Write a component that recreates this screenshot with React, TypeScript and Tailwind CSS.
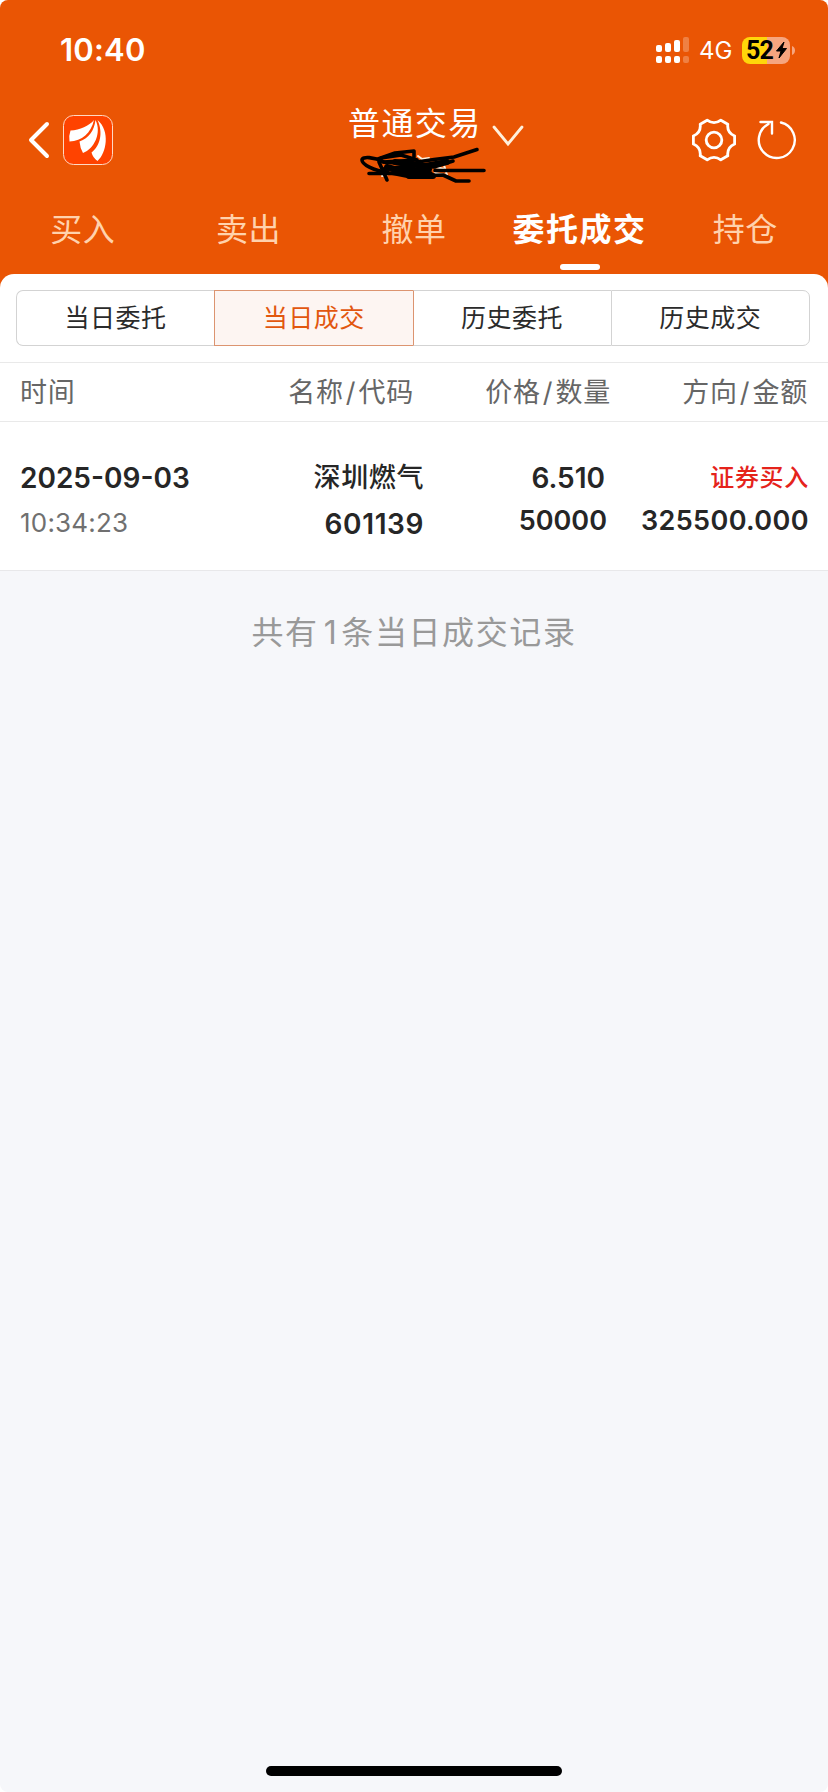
import clsx from 'clsx';

const TABS = ['买入', '卖出', '撤单', '委托成交', '持仓'];
const FILTERS = ['当日委托', '当日成交', '历史委托', '历史成交'];
const SIGNAL = [7, 9, 12, 15];

const StatusBar = () => (
  <div className="flex h-[100px] items-center justify-between pl-[60px] pr-8 text-white">
    <span className="pt-px text-[31px] font-semibold tracking-[0.2px]">10:40</span>
    <div className="flex items-center">
      <svg width="34" height="28" viewBox="0 0 34 28" fill="currentColor">
        {SIGNAL.map((h, i) => (
          <g key={h} opacity={i === 3 ? 0.25 : 1}>
            <rect x={i * 9} y={16 - h} width="6" height={h} rx="2" />
            <rect x={i * 9} y="20" width="6" height="7" rx="2" />
          </g>
        ))}
      </svg>
      <span className="ml-[9px] w-[43px] pt-0.5 text-[24px] leading-[28px]">4G</span>
      <div className="flex h-[27px] w-12 items-center rounded-[8px] bg-[linear-gradient(90deg,#ffd60a_52%,#f6a57f_52%)] pl-1 text-black">
        <span className="font-['Roboto',sans-serif] text-[25px] font-bold leading-[27px] tracking-[-0.8px]">52</span>
        <svg width="13" height="18" viewBox="0 0 12 18" className="ml-0.5" fill="currentColor">
          <path d="M8.5 1 1 10h4.5L3.5 17 11 7.500H6.600z" stroke="currentColor" strokeLinejoin="round" />
        </svg>
      </div>
      <svg width="4" height="9" viewBox="0 0 4 9" className="ml-0.5">
        <path d="M0 0c4 1.500 4 7.500 0 9z" fill="#f6a57f" />
      </svg>
    </div>
  </div>
);

const AppLogo = () => (
  <svg width="50" height="50" viewBox="0 0 50 50">
    <rect x="0.5" y="0.5" width="49" height="49" rx="10" fill="#ff4300" stroke="#ffd9c4" />
    <g fill="#fff">
      <path d="M31 5C26 11 17 15 7.500 15.500Q5.500 21 6.500 26.500C19 26 28 18 31 5Z" />
      <path d="M32.500 5C31 16 26 23 16.500 26.500Q17 33 20 38C31 34 39 18 32.500 5Z" />
      <path d="M34.500 5C40.500 18 37 31 28.500 37.500Q30 43 34.500 46C43.500 38 47.500 16 34.500 5Z" />
    </g>
  </svg>
);

const Scribble = () => (
  <svg
    width="136"
    height="45"
    viewBox="0 0 136 45"
    className="absolute left-[9px] top-[42px]"
    fill="none"
    stroke="#000"
    strokeWidth="3.6"
    strokeLinecap="round"
    strokeLinejoin="round"
  >
    <path d="M63 14l4 3 7-1M79 25l11 2M80 31l11 2M89 23l3 10M27 34l6-2" stroke="#fff0dc" strokeWidth="2" />
    <path d="M33 30C18 29 7 22 7 18c0-4 12-3 22 2M23 17l17-6 19-2v6" />
    <path d="M122 7.500 99 15 79 17.500 62 20M98 19 79 25 62 24M14 31.500h30M60 32l16-1M80 28.500h49M62 34l26-1 13 6h13" />
    <path d="M24 20 32 38M26 16l20-3 16 5-34 2 36 3-36 4h40l-32 4 20 4 18-4" />
    <path d="M40 20 70 24 92 20M32 25 50 30 74 27M54 34h24" strokeWidth="6" />
  </svg>
);

const NavBar = () => (
  <div className="grid h-20 grid-cols-[1fr_auto_1fr] items-center pl-7 pr-[31px] text-white">
    <div className="flex items-center">
      <svg width="35" height="40" viewBox="0 0 35 40" fill="none" stroke="currentColor" strokeWidth="4" strokeLinecap="round" strokeLinejoin="round">
        <path d="M19 4 3 20l16 16" />
      </svg>
      <AppLogo />
    </div>
    <div className="relative ml-[42px] flex h-20 w-[175px] pl-0.5">
      <span className="whitespace-nowrap text-[32px] leading-[48px] tracking-[1.4px]">普通交易</span>
      <svg width="32" height="22" viewBox="0 0 32 22" className="ml-2.5 mt-[25px] shrink-0" fill="none" stroke="#fff0dc" strokeWidth="2.800" strokeLinecap="round">
        <path d="m2 2 14 17L30 2" />
      </svg>
      <Scribble />
    </div>
    <div className="flex items-center justify-end gap-[21px]">
      <svg width="44" height="44" viewBox="-22.500 -22.500 45 45" fill="none" stroke="currentColor" strokeWidth="2.900" strokeLinejoin="round">
        <path d="M21.100 4.100C15.500 6.500 13.400 10.200 14.100 16.200L7 20.300C2.100 16.700-2.100 16.700-7 20.300L-14.100 16.200C-13.400 10.200-15.500 6.500-21.100 4.100V-4.100C-15.500-6.500-13.400-10.200-14.100-16.200L-7-20.300C-2.100-16.700 2.100-16.700 7-20.300L14.100-16.200C13.400-10.200 15.500-6.500 21.100-4.100Z" />
        <circle r="8" />
      </svg>
      <svg width="40" height="42" viewBox="0 0 40 42" fill="none" stroke="currentColor" strokeWidth="2.400" strokeLinecap="round">
        <path d="M24 3.500A18 18 0 1 1 11.500 5M3.500 3H15V14.500" />
      </svg>
    </div>
  </div>
);

const App = () => {
  const activeTab = 3;
  const activeFilter = 1;

  return (
    <div className="bg-white">
      <div className="flex h-[1792px] w-[828px] flex-col overflow-hidden rounded-[8px] bg-[#f6f7fa] font-['Inter','Noto_Sans_CJK_SC',sans-serif]">
        <header className="h-[290px] shrink-0 bg-[#ea5504]">
          <StatusBar />
          <NavBar />
          <nav className="grid h-[94px] grid-cols-5">
            {TABS.map((tab, i) => (
              <div
                key={tab}
                className={clsx(
                  'flex flex-col items-center pt-[27px] text-[32px] leading-[46px]',
                  i === activeTab ? 'font-bold tracking-[1.5px] text-white' : 'tracking-[0.5px] text-[#ffd2ad]'
                )}
              >
                {tab}
                {i === activeTab && <span className="mt-[11px] h-1.5 w-10 rounded-[3px] bg-white" />}
              </div>
            ))}
          </nav>
        </header>

        <main className="-mt-4 h-[297px] shrink-0 rounded-t-[14px] border-b border-[#e8e8ea] bg-white">
          <div className="pl-4 pr-[18px] pt-4">
            <div className="flex h-14">
              {FILTERS.map((filter, i) => (
                <button
                  key={filter}
                  className={clsx(
                    'flex-1 border-y border-l pt-0.5 text-[25px] tracking-[0.5px] first:rounded-l-[7px] last:rounded-r-[7px] last:border-r',
                    i === activeFilter
                      ? 'border-[#dc9470] bg-[#fdf5f2] text-[#e2570f]'
                      : 'border-[#d3d3d3] text-[#2b2b2b]',
                    i === activeFilter + 1 && 'border-l-[#dc9470]'
                  )}
                >
                  {filter}
                </button>
              ))}
            </div>
          </div>

          <div className="mt-4 grid h-[60px] grid-cols-[394px_197px_197px] items-center border-y border-[#e9e9e9] pl-5 pt-[3px] text-right text-[27px] tracking-[0.8px] text-[#666]">
            <div className="flex justify-between">
              <span>时间</span>
              <span>名称<i className="px-0.5 not-italic">/</i>代码</span>
            </div>
            <span>价格<i className="px-0.5 not-italic">/</i>数量</span>
            <span>方向<i className="px-0.5 not-italic">/</i>金额</span>
          </div>

          <div className="grid grid-cols-[202px_202px_183px_202px] pl-5 pt-[33px] text-[28px] font-semibold text-[#262626]">
            <div>
              <p className="leading-[46px]">2025-09-03</p>
              <p className="-mt-px text-[26px] font-normal leading-[46px] tracking-[0.2px] text-[#707070]">10:34:23</p>
            </div>
            <div className="text-right">
              <p className="text-[27px] font-medium leading-[46px] tracking-[0.6px]">深圳燃气</p>
              <p className="leading-[46px] tracking-[0.6px]">601139</p>
            </div>
            <div className="text-right">
              <p className="pr-0.5 leading-[46px]">6.510</p>
              <p className="text-[27px] leading-[40px]">50000</p>
            </div>
            <div className="text-right">
              <p className="text-[24px] font-medium leading-[46px] tracking-[0.7px] text-[#e5231b]">证券买入</p>
              <p className="text-[27px] leading-[40px] tracking-[0.4px]">325500.000</p>
            </div>
          </div>
        </main>

        <p className="mt-[39px] text-center text-[32px] leading-[46px] tracking-[1.6px] text-[#999]">
          共有<span className="pl-[5px] pr-[3px]">1</span>条当日成交记录
        </p>

        <div className="mx-auto mb-4 mt-auto h-2.5 w-[296px] rounded-full bg-black" />
      </div>
    </div>
  );
};

export default App;
